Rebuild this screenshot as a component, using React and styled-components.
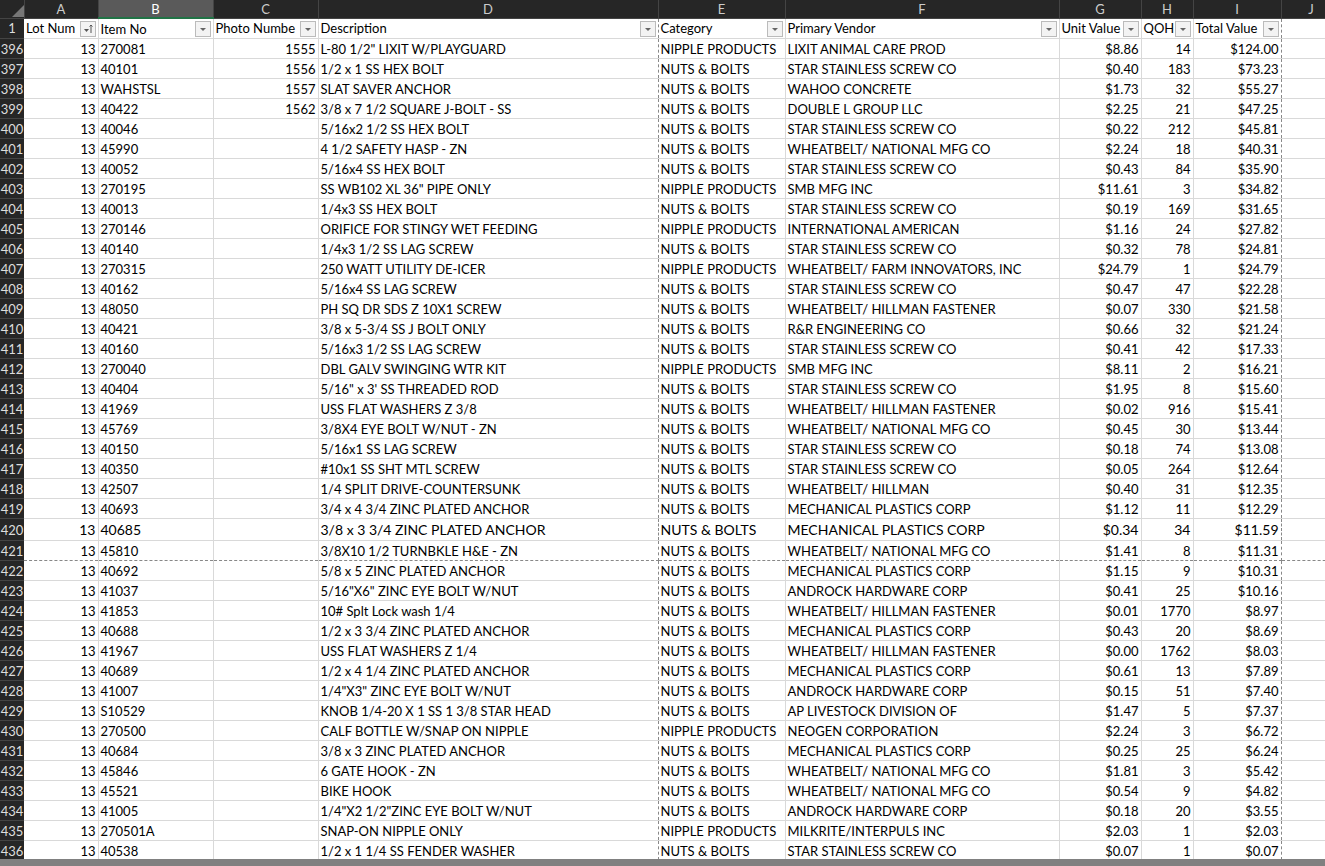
import React from "react";
import styled, { createGlobalStyle } from "styled-components";

const G = createGlobalStyle`
  body{margin:0;background:#fff;overflow:hidden;font-family:Lato,"Open Sans",sans-serif;}
`;
const cols = [24, 74, 115, 105, 340, 127, 274, 82, 52, 88, 60];
const letters = ["", "A", "B", "C", "D", "E", "F", "G", "H", "I", "J"];
const Sheet = styled.table`border-collapse:collapse;table-layout:fixed;width:1341px;font-size:13px;color:#000;`;
const Hd = styled.th`
  height:17px;padding:0;background:${p => (p.$sel ? "#5a5a5a" : "#262626")};color:${p => (p.$sel ? "#fff" : "#ccc")};
  font-weight:normal;font-size:13px;border-right:1px solid #444;
  border-bottom:${p => (p.$sel ? "2px solid #217346" : "1px solid #444")};
`;
const RowNum = styled.td`
  background:#262626;color:#ddd;text-align:center;padding:0;font-size:13px;border-bottom:1px solid #444;
`;
const Cell = styled.td`
  height:${p => p.$h}px;padding:0 2px;white-space:nowrap;overflow:hidden;
  border-right:1px ${p => (p.$dash ? "dashed #888" : "solid #d9d9d9")};
  border-bottom:1px ${p => (p.$bdash ? "dashed #888" : "solid #d9d9d9")};
  text-align:${p => (p.$r ? "right" : "left")};
  font-size:${p => (p.$big ? "14px" : "13px")};
`;
const HCell = styled(Cell)`position:relative;padding-right:18px;`;
const Filter = styled.span`
  position:absolute;right:2px;top:2px;width:14px;height:14px;border:1px solid #bbb;background:#f3f3f3;
  display:flex;align-items:center;justify-content:center;
`;
const Strip = styled.div`position:fixed;left:0;right:0;top:859px;height:7px;background:#808080;`;

const data = `396|13|270081|1555|L-80 1/2" LIXIT W/PLAYGUARD|NIPPLE PRODUCTS|LIXIT ANIMAL CARE PROD|$8.86|14|$124.00
397|13|40101|1556|1/2 x 1 SS HEX BOLT|NUTS & BOLTS|STAR STAINLESS SCREW CO|$0.40|183|$73.23
398|13|WAHSTSL|1557|SLAT SAVER ANCHOR|NUTS & BOLTS|WAHOO CONCRETE|$1.73|32|$55.27
399|13|40422|1562|3/8 x 7 1/2 SQUARE J-BOLT - SS|NUTS & BOLTS|DOUBLE L GROUP LLC|$2.25|21|$47.25
400|13|40046||5/16x2 1/2 SS HEX BOLT|NUTS & BOLTS|STAR STAINLESS SCREW CO|$0.22|212|$45.81
401|13|45990||4 1/2 SAFETY HASP - ZN|NUTS & BOLTS|WHEATBELT/ NATIONAL MFG CO|$2.24|18|$40.31
402|13|40052||5/16x4 SS HEX BOLT|NUTS & BOLTS|STAR STAINLESS SCREW CO|$0.43|84|$35.90
403|13|270195||SS WB102 XL 36" PIPE ONLY|NIPPLE PRODUCTS|SMB MFG INC|$11.61|3|$34.82
404|13|40013||1/4x3 SS HEX BOLT|NUTS & BOLTS|STAR STAINLESS SCREW CO|$0.19|169|$31.65
405|13|270146||ORIFICE FOR STINGY WET FEEDING|NIPPLE PRODUCTS|INTERNATIONAL AMERICAN|$1.16|24|$27.82
406|13|40140||1/4x3 1/2 SS LAG SCREW|NUTS & BOLTS|STAR STAINLESS SCREW CO|$0.32|78|$24.81
407|13|270315||250 WATT UTILITY DE-ICER|NIPPLE PRODUCTS|WHEATBELT/ FARM INNOVATORS, INC|$24.79|1|$24.79
408|13|40162||5/16x4 SS LAG SCREW|NUTS & BOLTS|STAR STAINLESS SCREW CO|$0.47|47|$22.28
409|13|48050||PH SQ DR SDS Z 10X1 SCREW|NUTS & BOLTS|WHEATBELT/ HILLMAN FASTENER|$0.07|330|$21.58
410|13|40421||3/8 x 5-3/4 SS J BOLT ONLY|NUTS & BOLTS|R&R ENGINEERING CO|$0.66|32|$21.24
411|13|40160||5/16x3 1/2 SS LAG SCREW|NUTS & BOLTS|STAR STAINLESS SCREW CO|$0.41|42|$17.33
412|13|270040||DBL GALV SWINGING WTR KIT|NIPPLE PRODUCTS|SMB MFG INC|$8.11|2|$16.21
413|13|40404||5/16" x 3' SS THREADED ROD|NUTS & BOLTS|STAR STAINLESS SCREW CO|$1.95|8|$15.60
414|13|41969||USS FLAT WASHERS Z 3/8|NUTS & BOLTS|WHEATBELT/ HILLMAN FASTENER|$0.02|916|$15.41
415|13|45769||3/8X4 EYE BOLT W/NUT - ZN|NUTS & BOLTS|WHEATBELT/ NATIONAL MFG CO|$0.45|30|$13.44
416|13|40150||5/16x1 SS LAG SCREW|NUTS & BOLTS|STAR STAINLESS SCREW CO|$0.18|74|$13.08
417|13|40350||#10x1 SS SHT MTL SCREW|NUTS & BOLTS|STAR STAINLESS SCREW CO|$0.05|264|$12.64
418|13|42507||1/4 SPLIT DRIVE-COUNTERSUNK|NUTS & BOLTS|WHEATBELT/ HILLMAN|$0.40|31|$12.35
419|13|40693||3/4 x 4 3/4 ZINC PLATED ANCHOR|NUTS & BOLTS|MECHANICAL PLASTICS CORP|$1.12|11|$12.29
420|13|40685||3/8 x 3 3/4 ZINC PLATED ANCHOR|NUTS & BOLTS|MECHANICAL PLASTICS CORP|$0.34|34|$11.59
421|13|45810||3/8X10 1/2 TURNBKLE H&E - ZN|NUTS & BOLTS|WHEATBELT/ NATIONAL MFG CO|$1.41|8|$11.31
422|13|40692||5/8 x 5 ZINC PLATED ANCHOR|NUTS & BOLTS|MECHANICAL PLASTICS CORP|$1.15|9|$10.31
423|13|41037||5/16"X6" ZINC EYE BOLT W/NUT|NUTS & BOLTS|ANDROCK HARDWARE CORP|$0.41|25|$10.16
424|13|41853||10# Splt Lock wash 1/4|NUTS & BOLTS|WHEATBELT/ HILLMAN FASTENER|$0.01|1770|$8.97
425|13|40688||1/2 x 3 3/4 ZINC PLATED ANCHOR|NUTS & BOLTS|MECHANICAL PLASTICS CORP|$0.43|20|$8.69
426|13|41967||USS FLAT WASHERS Z 1/4|NUTS & BOLTS|WHEATBELT/ HILLMAN FASTENER|$0.00|1762|$8.03
427|13|40689||1/2 x 4 1/4 ZINC PLATED ANCHOR|NUTS & BOLTS|MECHANICAL PLASTICS CORP|$0.61|13|$7.89
428|13|41007||1/4"X3" ZINC EYE BOLT W/NUT|NUTS & BOLTS|ANDROCK HARDWARE CORP|$0.15|51|$7.40
429|13|S10529||KNOB 1/4-20 X 1 SS 1 3/8 STAR HEAD|NUTS & BOLTS|AP LIVESTOCK DIVISION OF|$1.47|5|$7.37
430|13|270500||CALF BOTTLE W/SNAP ON NIPPLE|NIPPLE PRODUCTS|NEOGEN CORPORATION|$2.24|3|$6.72
431|13|40684||3/8 x 3 ZINC PLATED ANCHOR|NUTS & BOLTS|MECHANICAL PLASTICS CORP|$0.25|25|$6.24
432|13|45846||6 GATE HOOK - ZN|NUTS & BOLTS|WHEATBELT/ NATIONAL MFG CO|$1.81|3|$5.42
433|13|45521||BIKE HOOK|NUTS & BOLTS|WHEATBELT/ NATIONAL MFG CO|$0.54|9|$4.82
434|13|41005||1/4"X2 1/2"ZINC EYE BOLT W/NUT|NUTS & BOLTS|ANDROCK HARDWARE CORP|$0.18|20|$3.55
435|13|270501A||SNAP-ON NIPPLE ONLY|NIPPLE PRODUCTS|MILKRITE/INTERPULS INC|$2.03|1|$2.03
436|13|40538||1/2 x 1 1/4 SS FENDER WASHER|NUTS & BOLTS|STAR STAINLESS SCREW CO|$0.07|1|$0.07`.split("\n").map(l => l.split("|"));

const heads = ["Lot Num", "Item No", "Photo Numbe", "Description", "Category", "Primary Vendor", "Unit Value", "QOH", "Total Value"];
const right = [true, false, true, false, false, false, true, true, true];

const Arrow = ({ sort }) => (
  <Filter>
    <svg width="10" height="10" viewBox="0 0 10 10">
      {sort ? (
        <>
          <path d="M1 5h5L3.5 8z" fill="#555" />
          <path d="M8 1v8M6.5 2.5L8 1l1.5 1.5" stroke="#555" fill="none" />
        </>
      ) : (
        <path d="M2 4h6L5 7z" fill="#666" />
      )}
    </svg>
  </Filter>
);

export default function App() {
  return (
    <>
      <G />
      <Sheet>
        <colgroup>{cols.map((w, i) => <col key={i} style={{ width: w }} />)}</colgroup>
        <thead>
          <tr>
            {letters.map((l, i) => (
              <Hd key={i} $sel={l === "B"}>
                {i === 0 ? (
                  <svg width="12" height="12" viewBox="0 0 12 12" style={{ float: "right", marginTop: 4 }}><path d="M12 0v12H0z" fill="#777" /></svg>
                ) : l}
              </Hd>
            ))}
          </tr>
        </thead>
        <tbody>
          <tr>
            <RowNum>1</RowNum>
            {heads.map((h, i) => (
              <HCell key={i} $h={19} $dash={i === 8 || i === 3}>
                {h}
                <Arrow sort={i === 0} />
              </HCell>
            ))}
            <Cell $h={19} />
          </tr>
          {data.map(r => {
            const big = r[0] === "420";
            return (
              <tr key={r[0]}>
                <RowNum>{r[0]}</RowNum>
                {r.slice(1).map((v, i) => (
                  <Cell key={i} $h={big ? 21 : 19} $r={right[i]} $big={big} $dash={i === 8 || i === 3} $bdash={r[0] === "421"}>{v}</Cell>
                ))}
                <Cell $h={big ? 21 : 19} $bdash={r[0] === "421"} />
              </tr>
            );
          })}
        </tbody>
      </Sheet>
      <Strip />
    </>
  );
}
